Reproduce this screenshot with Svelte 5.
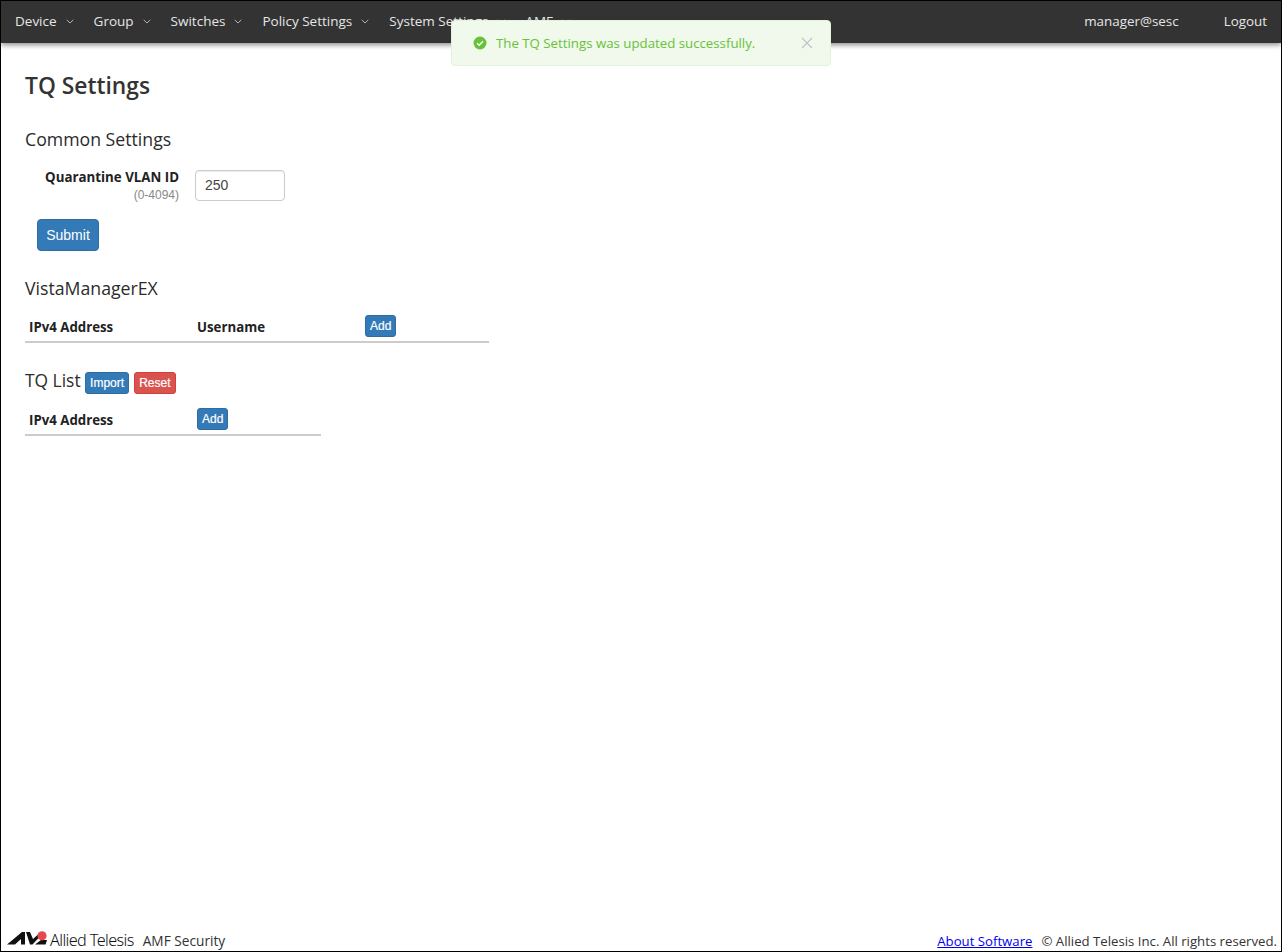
<script>
    const menus = ['Device', 'Group', 'Switches', 'Policy Settings', 'System Settings', 'AMF'];
</script>

<div class="window">
    <nav class="navbar">
        <ul class="menu">
            {#each menus as menu}
                <li>
                    {menu}
                    <svg class="caret" width="8" height="5" viewBox="0 0 8 5"><path d="M.7.8 4 4 7.3.8" fill="none" stroke="#b4b4b4" stroke-width="1"/></svg>
                </li>
            {/each}
        </ul>
        <div class="user">
            <span>manager@sesc</span>
            <span>Logout</span>
        </div>
    </nav>

    <div class="toast">
        <svg width="14" height="14" viewBox="0 0 14 14">
            <circle cx="7" cy="7" r="6.5" fill="#67c23a"/>
            <path d="M4 7.2 6.2 9.2 10 5.2" fill="none" stroke="#fff" stroke-width="1.4"/>
        </svg>
        <span class="toast-text">The TQ Settings was updated successfully.</span>
        <svg class="toast-close" width="12" height="12" viewBox="0 0 12 12"><path d="M1 1 11 11M11 1 1 11" stroke="#c0c4cc" stroke-width="1.2"/></svg>
    </div>

    <main class="content">
        <h1>TQ Settings</h1>

        <h2 class="common">Common Settings</h2>
        <div class="field">
            <div class="label">
                <strong>Quarantine VLAN ID</strong>
                <small>(0-4094)</small>
            </div>
            <input type="text" value="250" />
        </div>
        <button class="btn submit">Submit</button>

        <h2 class="vista">VistaManagerEX</h2>
        <div class="table wide">
            <span class="col">IPv4 Address</span>
            <span class="col">Username</span>
            <button class="btn xs">Add</button>
        </div>

        <h2 class="tq">TQ List <button class="btn xs">Import</button> <button class="btn xs danger">Reset</button></h2>
        <div class="table narrow">
            <span class="col">IPv4 Address</span>
            <button class="btn xs">Add</button>
        </div>
    </main>

    <footer>
        <div class="brand">
            <svg class="logo" width="40" height="14" viewBox="0 0 40 14">
                <path d="M0 13.5 15 1 18 1 18 13.5 14 13.5 14 8 8 13.5Z" fill="#111"/>
                <path d="M19 1 23 1 26 8 31 3.5 32.5 6 25.5 13.5 23 13.5Z" fill="#111"/>
                <path d="M28 13.5 34 9 40 9 38.5 13.5Z" fill="#111"/>
                <circle cx="35" cy="4.8" r="4.6" fill="#e8474c"/>
            </svg>
            <span class="company">Allied Telesis</span>
            <span class="product">AMF Security</span>
        </div>
        <div class="legal">
            <a href="#about">About Software</a>
            <span>© Allied Telesis Inc. All rights reserved.</span>
        </div>
    </footer>
</div>

<style>
    :global(body) {
        margin: 0;
        background: #fff;
    }

    .window {
        position: relative;
        box-sizing: border-box;
        width: 1282px;
        height: 952px;
        border: 1px solid #000;
        display: flex;
        flex-direction: column;
        font-family: "Open Sans", "Noto Sans", sans-serif;
        color: #333;
    }

    .navbar {
        box-sizing: border-box;
        height: 42px;
        flex: none;
        background: #333;
        color: #e6e6e6;
        display: flex;
        justify-content: space-between;
        align-items: center;
        box-shadow: 0 2px 5px rgba(0, 0, 0, 0.45);
        font-size: 13.5px;
        padding: 0 14px 2px;
    }

    .menu {
        list-style: none;
        margin: 0;
        padding: 0;
        display: flex;
        gap: 20px;
    }

    .menu li {
        display: flex;
        align-items: center;
        gap: 9px;
    }

    .user {
        display: flex;
        gap: 45px;
        font-size: 13.4px;
    }

    .toast {
        position: absolute;
        left: 450px;
        top: 19px;
        box-sizing: border-box;
        width: 380px;
        height: 46px;
        display: flex;
        align-items: center;
        padding: 0 17px 0 21px;
        background: #f0f9eb;
        border: 1px solid #e1f3d8;
        border-radius: 4px;
    }

    .toast-text {
        margin-left: 9px;
        font-size: 13.25px;
        color: #67c23a;
        flex: 1;
    }

    .content {
        flex: 1;
        padding: 0 24px;
    }

    h1 {
        margin: 28px 0 0;
        font-size: 22.8px;
        font-weight: 600;
        line-height: 30px;
    }

    h2 {
        margin: 0;
        font-size: 17.7px;
        font-weight: 500;
        line-height: 24px;
        color: #2b2b2b;
    }

    .common {
        margin-top: 26px;
    }

    .field {
        display: flex;
        margin-top: 19px;
    }

    .label {
        width: 154px;
        margin-top: -2px;
        display: flex;
        flex-direction: column;
        align-items: flex-end;
        color: #222;
    }

    .label strong {
        font-size: 13.3px;
        font-weight: 700;
        line-height: 18px;
    }

    .label small {
        font-family: "Liberation Sans", Arial, sans-serif;
        font-size: 12px;
        line-height: 18px;
        color: #888;
    }

    input {
        box-sizing: border-box;
        margin-left: 16px;
        width: 90px;
        height: 31px;
        padding: 0 9px 2px;
        border: 1px solid #ccc;
        border-radius: 4px;
        font-family: "Liberation Sans", Arial, sans-serif;
        font-size: 14px;
        color: #444;
        box-shadow: inset 0 1px 1px rgba(0, 0, 0, 0.075);
    }

    .btn {
        font-family: "Liberation Sans", Arial, sans-serif;
        color: #fff;
        background: #337ab7;
        border: 1px solid #2e6da4;
        border-radius: 4px;
        padding: 0;
    }

    .submit {
        display: block;
        margin: 15px 0 0 12px;
        width: 62px;
        height: 32px;
        font-size: 14px;
    }

    .xs {
        height: 22px;
        padding: 0 4px;
        font-size: 12px;
        border-radius: 3px;
        vertical-align: 0;
        -webkit-text-stroke: 0.2px #fff;
    }

    .danger {
        background: #d9534f;
        border-color: #d43f3a;
        padding: 0 4.5px;
    }

    .vista {
        margin-top: 25px;
    }

    .table {
        display: flex;
        align-items: flex-start;
        box-sizing: border-box;
        height: 31px;
        padding: 0 0 0 4px;
        margin-top: 12px;
        border-bottom: 2px solid #ccc;
        font-size: 13.25px;
        font-weight: 700;
        color: #222;
    }

    .table .col {
        width: 168px;
        margin-top: 6px;
        line-height: 18px;
    }

    .table .xs {
        margin-top: 3px;
    }

    .wide {
        width: 464px;
    }

    .narrow {
        width: 296px;
        margin-top: 11px;
    }

    .tq {
        margin-top: 25px;
        font-size: 17.4px;
    }

    footer {
        flex: none;
        height: 20px;
        display: flex;
        justify-content: space-between;
        align-items: flex-end;
        padding: 0 4px 1px 6px;
        font-size: 13.2px;
    }

    .brand {
        display: flex;
        align-items: flex-end;
    }

    .logo {
        margin-bottom: 5px;
    }

    .company {
        margin-left: 3px;
        margin-bottom: 1px;
        font-family: "Noto Sans", sans-serif;
        font-size: 16.2px;
        font-weight: 300;
        letter-spacing: -0.6px;
        line-height: 18px;
        color: #111;
    }

    .product {
        margin-left: 9px;
        font-size: 13.7px;
        line-height: 18px;
    }

    .legal {
        display: flex;
        gap: 9px;
        line-height: 18px;
    }

    .legal a {
        color: #00e;
    }
</style>
